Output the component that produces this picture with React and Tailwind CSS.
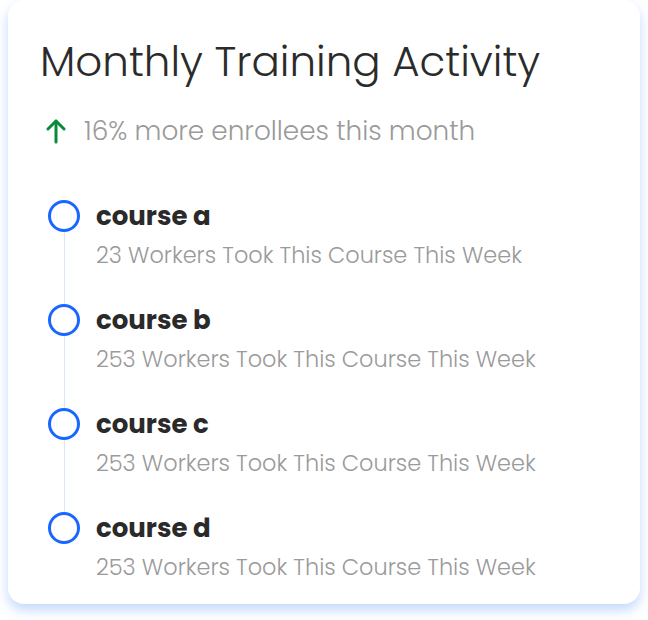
import React from 'react'

const courses = [
  {name: 'course a', count: 23},
  {name: 'course b', count: 253},
  {name: 'course c', count: 253},
  {name: 'course d', count: 253},
]

const ArrowUp = () => (
  <svg width="20" height="26" viewBox="0 0 20 26" fill="none" stroke="#0a8a3c" strokeWidth="3" strokeLinecap="round" strokeLinejoin="round">
    <path d="M10 24V3" />
    <path d="M2 11l8-8 8 8" />
  </svg>
)

const App = () => {
  return (
    <div className="w-[648px] h-[620px] bg-white" style={{fontFamily: 'Poppins, Inter, "Noto Sans", sans-serif'}}>
      <div className="ml-2 w-[632px] h-[604px] bg-white rounded-2xl shadow-[0_6px_12px_rgba(120,170,250,0.45)] px-8 pt-[34px]">
        <h1 className="text-[42px] leading-[56px] font-light text-[#2b2b2b]">Monthly Training Activity</h1>
        <div className="flex items-center mt-[25px] h-8">
          <div className="w-11 pl-[6px] flex items-center"><ArrowUp /></div>
          <span className="text-[26.3px] font-light text-[#9a9a9a]">16% more enrollees this month</span>
        </div>
        <div className="mt-[53px] pl-2">
          {courses.map((c, i) => (
            <div key={i} className="flex h-[104px]">
              <div className="flex flex-col items-center w-8">
                <div className="w-8 h-8 rounded-full border-[3px] border-[#1a66ff] shrink-0" />
                {i < courses.length - 1 && <div className="w-px flex-1 bg-[#dbe6fb]" />}
              </div>
              <div className="ml-4">
                <div className="text-[26px] leading-8 font-bold text-[#2a2a2a]">{c.name}</div>
                <div className="text-[22.4px] leading-[30px] mt-2 font-light text-[#9a9a9a]">{c.count} Workers Took This Course This Week</div>
              </div>
            </div>
          ))}
        </div>
      </div>
    </div>
  )
}

export default App
